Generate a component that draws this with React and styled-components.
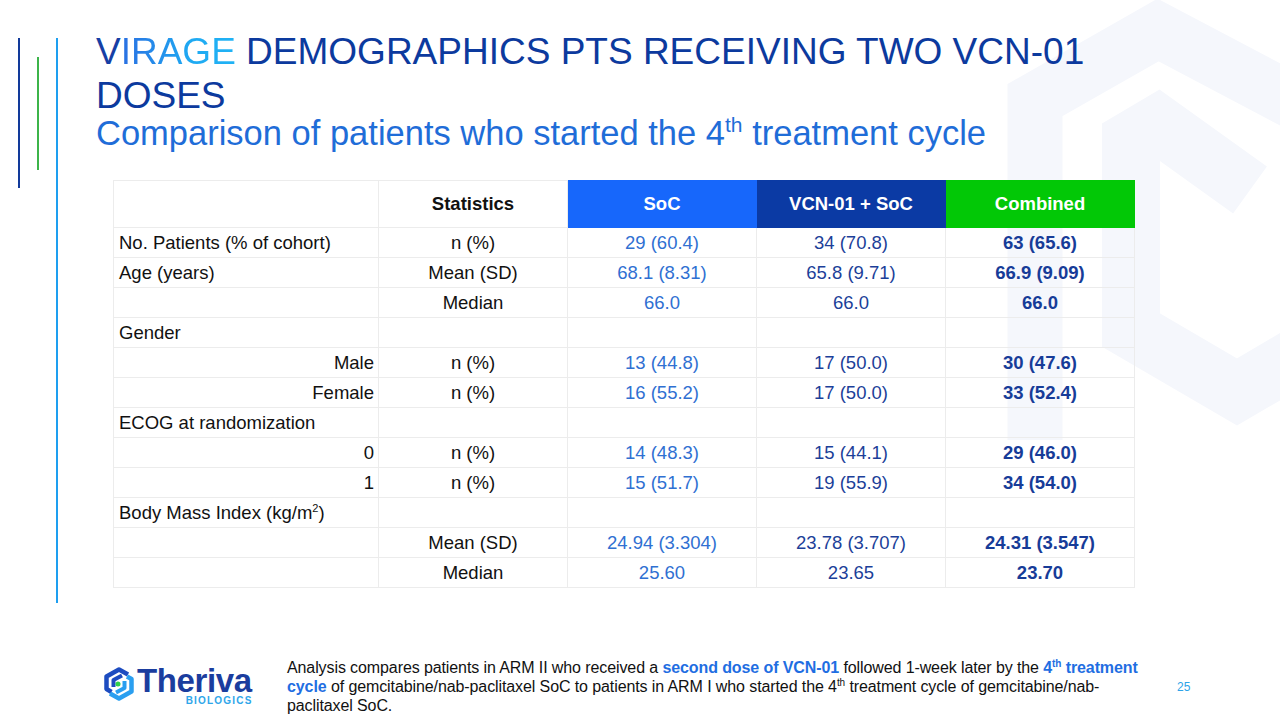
import React from 'react';
import styled, { createGlobalStyle } from 'styled-components';

const GlobalStyle = createGlobalStyle`
  html, body {
    margin: 0;
    padding: 0;
    background: #ffffff;
  }
  body {
    font-family: "Liberation Sans", Arial, sans-serif;
  }
`;

const Page = styled.div`
  position: relative;
  width: 1280px;
  height: 720px;
  overflow: hidden;
  background: #ffffff;
  display: grid;
  grid-template-columns: 96px 1fr;
`;

const Watermark = styled.svg`
  position: absolute;
  top: 0;
  right: 0;
  width: 300px;
  height: 450px;
  z-index: 0;
`;

const Rail = styled.div`
  display: flex;
  align-items: flex-start;
  gap: 17px;
  padding: 38px 0 0 18px;
  z-index: 1;
`;

const Bar = styled.div`
  width: 2px;
  height: ${(p) => p.$h}px;
  margin-top: ${(p) => p.$top || 0}px;
  background: ${(p) => p.$color};
`;

const Main = styled.div`
  position: relative;
  z-index: 1;
  display: flex;
  flex-direction: column;
  padding-top: 30px;
`;

const Title = styled.h1`
  margin: 0;
  max-width: 1030px;
  font-size: 37px;
  line-height: 44px;
  font-weight: 400;
  color: #0c3a9e;
`;

const Virage = styled.span`
  color: #163fa5;
`;

const ViragePart = styled.span`
  background: linear-gradient(90deg, #2a6fe2 0%, #1fa9f2 60%, #20b3f5 100%);
  -webkit-background-clip: text;
  background-clip: text;
  color: transparent;
`;

const Subtitle = styled.h2`
  margin: -3px 0 0;
  font-size: 34.5px;
  line-height: 36px;
  font-weight: 400;
  color: #1f6dd8;

  sup {
    font-size: 21px;
    line-height: 0;
    vertical-align: 13px;
  }
`;

const Table = styled.table`
  margin: 29px 0 0 17px;
  border-collapse: collapse;
  table-layout: fixed;
  width: 1021px;
  font-size: 18.5px;
`;

const HeadCell = styled.th`
  height: 46px;
  padding: 0;
  font-weight: 700;
  font-size: 18.5px;
  text-align: center;
  color: ${(p) => (p.$bg ? '#ffffff' : '#111111')};
  background: ${(p) => p.$bg || '#ffffff'};
  border: 1px solid ${(p) => p.$bg || '#ececec'};
`;

const Cell = styled.td`
  height: 29px;
  padding: 0 ${(p) => (p.$align === 'right' ? '4px' : '5px')};
  text-align: ${(p) => p.$align || 'center'};
  color: ${(p) => p.$color || '#111111'};
  font-weight: ${(p) => (p.$bold ? 700 : 400)};
  border: 1px solid #ececec;
  white-space: nowrap;
  line-height: 20px;

  sup {
    font-size: 11px;
    line-height: 0;
    vertical-align: 7px;
  }
`;

const Footer = styled.div`
  margin-top: auto;
  display: flex;
  align-items: center;
  padding: 0 0 5px 7px;
`;

const Logo = styled.div`
  display: flex;
  align-items: flex-start;
  width: 150px;
  margin-right: 34px;
`;

const LogoWords = styled.div`
  display: flex;
  flex-direction: column;
  align-items: flex-end;
  margin-left: 2px;
`;

const LogoName = styled.div`
  font-size: 33px;
  line-height: 28px;
  font-weight: 700;
  color: #1b3d9e;
  letter-spacing: -0.4px;
`;

const LogoSub = styled.div`
  font-size: 10px;
  line-height: 11px;
  font-weight: 700;
  color: #2ea6ea;
  letter-spacing: 1.2px;
  margin-right: -1px;
`;

const Note = styled.p`
  margin: 0;
  width: 870px;
  flex-shrink: 0;
  font-size: 16px;
  line-height: 19px;
  color: #111111;
  letter-spacing: -0.1px;

  b {
    color: #1f6ee2;
  }

  sup {
    font-size: 10px;
    line-height: 0;
    vertical-align: 6px;
  }
`;

const PageNum = styled.div`
  margin-left: 20px;
  font-size: 12px;
  color: #2ea3e8;
`;

const heads = [
  { label: '' },
  { label: 'Statistics' },
  { label: 'SoC', bg: '#1767fb' },
  { label: 'VCN-01 + SoC', bg: '#0b3aa4' },
  { label: 'Combined', bg: '#02c806' },
];

const rows = [
  { label: 'No. Patients (% of cohort)', stat: 'n (%)', v: ['29 (60.4)', '34 (70.8)', '63 (65.6)'] },
  { label: 'Age (years)', stat: 'Mean (SD)', v: ['68.1 (8.31)', '65.8 (9.71)', '66.9 (9.09)'] },
  { label: '', stat: 'Median', v: ['66.0', '66.0', '66.0'] },
  { label: 'Gender' },
  { label: 'Male', sub: true, stat: 'n (%)', v: ['13 (44.8)', '17 (50.0)', '30 (47.6)'] },
  { label: 'Female', sub: true, stat: 'n (%)', v: ['16 (55.2)', '17 (50.0)', '33 (52.4)'] },
  { label: 'ECOG at randomization' },
  { label: '0', sub: true, stat: 'n (%)', v: ['14 (48.3)', '15 (44.1)', '29 (46.0)'] },
  { label: '1', sub: true, stat: 'n (%)', v: ['15 (51.7)', '19 (55.9)', '34 (54.0)'] },
  { label: <>Body Mass Index (kg/m<sup>2</sup>)</> },
  { label: '', stat: 'Mean (SD)', v: ['24.94 (3.304)', '23.78 (3.707)', '24.31 (3.547)'] },
  { label: '', stat: 'Median', v: ['25.60', '23.65', '23.70'] },
];

const valueColors = ['#2f70d2', '#1c3f99', '#173c98'];

const HexIcon = () => (
  <svg width="32" height="34" viewBox="0 0 32 34">
    <path d="M25 7.5 L16 2.5 L3.5 9.5 L3.5 22 L8.5 25" fill="none" stroke="#1d4cc0" strokeWidth="4.5" strokeLinejoin="round" />
    <path d="M19 8.5 L10.5 13 L10.5 20" fill="none" stroke="#1d4cc0" strokeWidth="4" strokeLinejoin="round" />
    <path d="M7 26.5 L16 31.5 L28.5 24.5 L28.5 12 L24 9.5" fill="none" stroke="#2a9ff0" strokeWidth="4.5" strokeLinejoin="round" />
    <path d="M13 25.5 L21.5 21 L21.5 14" fill="none" stroke="#2a9ff0" strokeWidth="4" strokeLinejoin="round" />
    <circle cx="15" cy="17" r="2.5" fill="#2fd04a" />
  </svg>
);

export default function App() {
  return (
    <>
      <GlobalStyle />
      <Page>
        <Watermark viewBox="980 0 300 450">
          <path d="M1035 440 L1035 100 L1158 30 L1300 105" fill="none" stroke="#f5f7fc" strokeWidth="55" />
          <path d="M1250 190 L1158 124 L1131 140 L1131 330 L1237 392 L1300 355" fill="none" stroke="#f5f7fc" strokeWidth="58" />
        </Watermark>
        <Rail>
          <Bar $h={150} $color="#123a9a" />
          <Bar $h={113} $top={19} $color="#3cb44a" />
          <Bar $h={565} $color="#1e9ff0" />
        </Rail>
        <Main>
          <Title>
            <Virage>V</Virage>
            <ViragePart>IRAGE</ViragePart> DEMOGRAPHICS PTS RECEIVING TWO VCN-01 DOSES
          </Title>
          <Subtitle>
            Comparison of patients who started the 4<sup>th</sup> treatment cycle
          </Subtitle>
          <Table>
            <colgroup>
              <col style={{ width: 265 }} />
              <col style={{ width: 189 }} />
              <col style={{ width: 189 }} />
              <col style={{ width: 189 }} />
              <col style={{ width: 189 }} />
            </colgroup>
            <thead>
              <tr>
                {heads.map((h, i) => (
                  <HeadCell key={i} $bg={h.bg}>
                    {h.label}
                  </HeadCell>
                ))}
              </tr>
            </thead>
            <tbody>
              {rows.map((r, i) => (
                <tr key={i}>
                  <Cell $align={r.sub ? 'right' : 'left'}>{r.label}</Cell>
                  <Cell>{r.stat || ''}</Cell>
                  {(r.v || ['', '', '']).map((v, j) => (
                    <Cell key={j} $color={valueColors[j]} $bold={j === 2}>
                      {v}
                    </Cell>
                  ))}
                </tr>
              ))}
            </tbody>
          </Table>
          <Footer>
            <Logo>
              <HexIcon />
              <LogoWords>
                <LogoName>Theriva</LogoName>
                <LogoSub>BIOLOGICS</LogoSub>
              </LogoWords>
            </Logo>
            <Note>
              Analysis compares patients in ARM II who received a <b>second dose of VCN-01</b> followed
              1-week later by the{' '}
              <b>
                4<sup>th</sup> treatment cycle
              </b>{' '}
              of gemcitabine/nab-paclitaxel SoC to patients in ARM I who started the 4<sup>th</sup> treatment
              cycle of gemcitabine/nab-paclitaxel SoC.
            </Note>
            <PageNum>25</PageNum>
          </Footer>
        </Main>
      </Page>
    </>
  );
}
